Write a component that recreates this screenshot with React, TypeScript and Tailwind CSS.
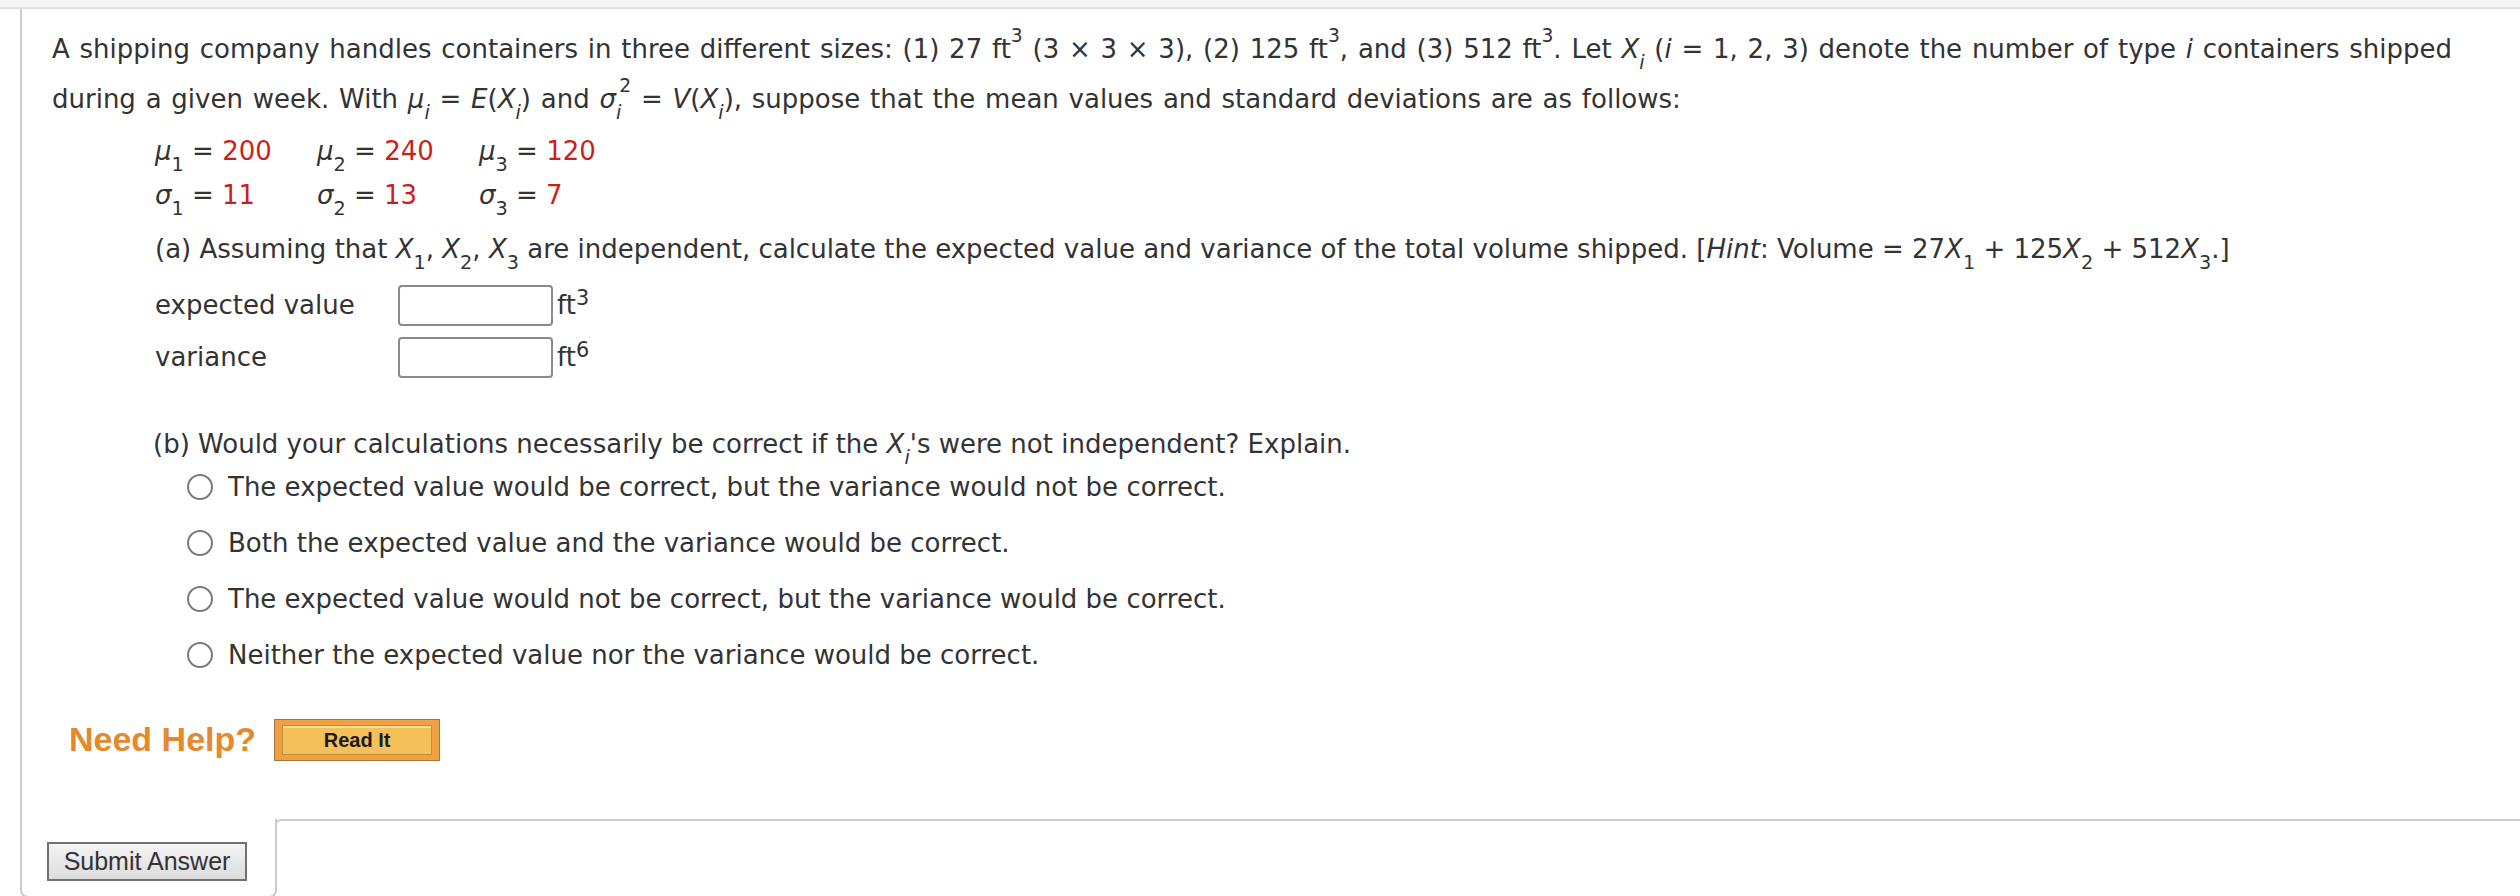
import React from "react";

const Sub = ({ children }: { children: React.ReactNode }) => (
  <span className="relative text-[74%] leading-[0] top-[0.56em] align-baseline">{children}</span>
);
const Sup = ({ children }: { children: React.ReactNode }) => (
  <span className="relative text-[72%] leading-[0] top-[-0.85em] align-baseline">{children}</span>
);
const SupLow = ({ children }: { children: React.ReactNode }) => (
  <span className="relative text-[80%] leading-[0] top-[-0.42em] align-baseline">{children}</span>
);

const Xi = () => (
  <>
    <i>X</i>
    <Sub>
      <i>i</i>
    </Sub>
  </>
);

const Radio = ({ label }: { label: string }) => (
  <div className="flex h-[56px] items-center">
    <span className="inline-block h-[26px] w-[26px] shrink-0 rounded-full border-2 border-[#7a7a7a] bg-white" />
    <span className="ml-[15px]">{label}</span>
  </div>
);

const Red = ({ children }: { children: React.ReactNode }) => <span className="text-[#cc1f1a]">{children}</span>;

export default function App() {
  return (
    <div className="min-h-[896px] w-[2520px] bg-white font-['DejaVu_Sans',Verdana,sans-serif] text-[26px] text-[#333333]">
      <div className="h-[9px] border-b-2 border-[#dedede] bg-[#f5f5f5]" />
      <div className="ml-[20px]">
        <div className="border-l-2 border-[#cccccc] pb-[54px] pl-[30px] pt-[15px]">
          <p className="leading-[50px] [word-spacing:1.5px]">
            A shipping company handles containers in three different sizes: (1) 27 ft<Sup>3</Sup> (3 × 3 × 3), (2) 125
            ft<Sup>3</Sup>, and (3) 512 ft<Sup>3</Sup>. Let <Xi /> (<i>i</i> = 1, 2, 3) denote the number of type{" "}
            <i>i</i> containers shipped
            <br />
            during a given week. With <i>μ</i>
            <Sub>
              <i>i</i>
            </Sub>{" "}
            = <i>E</i>(<Xi />) and <i>σ</i>
            <Sub>
              <i>i</i>
            </Sub>
            <span className="relative -ml-[2px] text-[72%] leading-[0] top-[-0.85em]">2</span> = <i>V</i>(<Xi />),
            suppose that the mean values and standard deviations are as follows:
          </p>

          <div className="pl-[103px]">
            <div className="mt-[5px] grid grid-cols-[162px_162px_162px] leading-[44px]">
              <div>
                <i>μ</i>
                <Sub>1</Sub> = <Red>200</Red>
              </div>
              <div>
                <i>μ</i>
                <Sub>2</Sub> = <Red>240</Red>
              </div>
              <div>
                <i>μ</i>
                <Sub>3</Sub> = <Red>120</Red>
              </div>
              <div>
                <i>σ</i>
                <Sub>1</Sub> = <Red>11</Red>
              </div>
              <div>
                <i>σ</i>
                <Sub>2</Sub> = <Red>13</Red>
              </div>
              <div>
                <i>σ</i>
                <Sub>3</Sub> = <Red>7</Red>
              </div>
            </div>

            <p className="mt-[10px] leading-[44px]">
              (a) Assuming that <i>X</i>
              <Sub>1</Sub>, <i>X</i>
              <Sub>2</Sub>, <i>X</i>
              <Sub>3</Sub> are independent, calculate the expected value and variance of the total volume shipped. [
              <i>Hint</i>: Volume = 27<i>X</i>
              <Sub>1</Sub> + 125<i>X</i>
              <Sub>2</Sub> + 512<i>X</i>
              <Sub>3</Sub>.]
            </p>

            <div className="mt-[8px]">
              <div className="flex h-[52px] items-center">
                <span className="w-[243px]">expected value</span>
                <span className="h-[41px] w-[155px] rounded-[4px] border-2 border-[#8a8a8a] bg-white" />
                <span className="ml-[4px]">
                  ft<SupLow>3</SupLow>
                </span>
              </div>
              <div className="flex h-[52px] items-center">
                <span className="w-[243px]">variance</span>
                <span className="h-[41px] w-[155px] rounded-[4px] border-2 border-[#8a8a8a] bg-white" />
                <span className="ml-[4px]">
                  ft<SupLow>6</SupLow>
                </span>
              </div>
            </div>
          </div>

          <div className="mt-[46px] pl-[101px]">
            <p className="leading-[30px]">
              (b) Would your calculations necessarily be correct if the <Xi />
              's were not independent? Explain.
            </p>
            <div className="pl-[34px]">
              <Radio label="The expected value would be correct, but the variance would not be correct." />
              <Radio label="Both the expected value and the variance would be correct." />
              <Radio label="The expected value would not be correct, but the variance would be correct." />
              <Radio label="Neither the expected value nor the variance would be correct." />
            </div>
          </div>

          <div className="mt-[31px] flex items-center pl-[17px]">
            <span className="font-['Liberation_Sans',Arial,sans-serif] text-[34px] font-bold text-[#e38a2c]">
              Need Help?
            </span>
            <button className="ml-[18px] h-[42px] w-[166px] border-[1.5px] border-[#a8763a] bg-[#efa043] p-[5px_7px]">
              <span className="flex h-full w-full items-center justify-center border border-[#c58c3e] bg-[#f4c05a] font-['Liberation_Sans',Arial,sans-serif] text-[20px] font-bold text-[#1a1a1a] shadow-[inset_0_2px_0_#f9dc9a]">
                Read It
              </span>
            </button>
          </div>
        </div>

        <div className="flex">
          <div className="h-[79px] w-[257px] rounded-b-[8px] border-x-2 border-b-2 border-[#cccccc] pl-[25px] pt-[23px]">
            <button className="h-[39px] w-[200px] border-2 border-[#707070] bg-gradient-to-b from-[#f4f4f4] to-[#dcdcdc] font-['Liberation_Sans',Arial,sans-serif] text-[25px] leading-none text-[#333]">
              Submit Answer
            </button>
          </div>
          <div className="-ml-[2px] h-[8px] flex-1 rounded-tl-[6px] border-l-2 border-t-2 border-[#cccccc]" />
        </div>
      </div>
    </div>
  );
}
